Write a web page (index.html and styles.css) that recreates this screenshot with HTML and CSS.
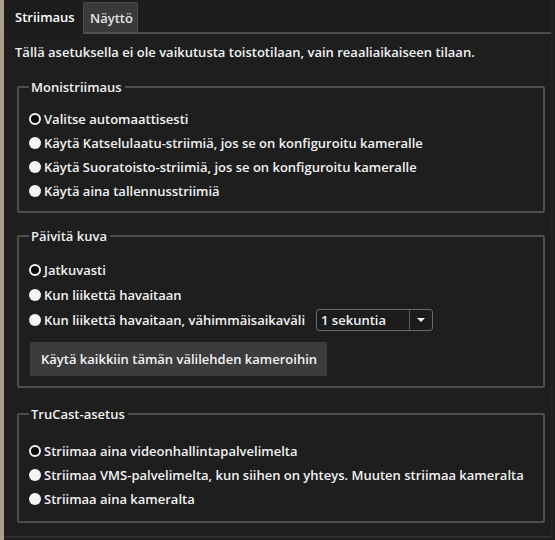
FILE: index.html
```html
<!DOCTYPE html>
<html lang="fi">
<head>
<meta charset="utf-8">
<link rel="stylesheet" href="styles.css">
</head>
<body>
<div class="app">
  <div class="tabbar">
    <div class="tab active">Striimaus</div>
    <div class="tab">Näyttö</div>
    <div class="tabfill"></div>
  </div>
  <div class="panel">
    <div class="info">Tällä asetuksella ei ole vaikutusta toistotilaan, vain reaaliaikaiseen tilaan.</div>

    <fieldset class="group g1">
      <legend>Monistriimaus</legend>
      <div class="row"><span class="radio on"></span>Valitse automaattisesti</div>
      <div class="row"><span class="radio"></span>Käytä Katselulaatu-striimiä, jos se on konfiguroitu kameralle</div>
      <div class="row"><span class="radio"></span>Käytä Suoratoisto-striimiä, jos se on konfiguroitu kameralle</div>
      <div class="row"><span class="radio"></span>Käytä aina tallennusstriimiä</div>
    </fieldset>

    <fieldset class="group g2">
      <legend>Päivitä kuva</legend>
      <div class="row"><span class="radio on"></span>Jatkuvasti</div>
      <div class="row"><span class="radio"></span>Kun liikettä havaitaan</div>
      <div class="row"><span class="radio"></span>Kun liikettä havaitaan, vähimmäisaikaväli
        <div class="select"><span class="sel-text">1 sekuntia</span><span class="sel-btn"><span class="tri"></span></span></div>
      </div>
      <div class="button">Käytä kaikkiin tämän välilehden kameroihin</div>
    </fieldset>

    <fieldset class="group g3">
      <legend>TruCast-asetus</legend>
      <div class="row"><span class="radio on"></span>Striimaa aina videonhallintapalvelimelta</div>
      <div class="row"><span class="radio"></span>Striimaa VMS-palvelimelta, kun siihen on yhteys. Muuten striimaa kameralta</div>
      <div class="row"><span class="radio"></span>Striimaa aina kameralta</div>
    </fieldset>
  </div>
</div>
</body>
</html>
```

FILE: styles.css
```css
html, body {
  margin: 0;
  padding: 0;
  background: #1c1c1d;
}
body {
  font-family: "Open Sans", "Liberation Sans", sans-serif;
  font-weight: 600;
  font-size: 13px;
  color: #f2f2f2;
  width: 555px;
  height: 540px;
  overflow: hidden;
}
.app {
  border-left: 4px solid #a99f8b;
  height: 540px;
  box-sizing: border-box;
  width: 553px;
  background: #1c1c1d;
  border-right: 2px solid #232323;
}
.tabbar {
  display: flex;
  height: 34px;
  align-items: flex-end;
}
.tab {
  height: 32px;
  box-sizing: border-box;
  line-height: 30px;
  color: #e8e8e8;
}
.tab.active {
  padding: 0 7px 0 11px;
  width: 79px;
  color: #ffffff;
  height: 34px;
  line-height: 34px;
}
.tab:not(.active) {
  background: #3a3a3b;
  border: 1px solid #4a4a4a;
  border-bottom: 2px solid #505050;
  border-radius: 2px 2px 0 0;
  width: 55px;
  padding-left: 6px;
  color: #e4e4e4;
}
.tabfill {
  flex: 1;
  height: 34px;
  box-sizing: border-box;
  border-bottom: 2px solid #4c4c4c;
}
.panel {
  background: #1e1e1f;
  padding: 9px 0 13px;
  border-bottom: 2px solid #2e2e2e;
}
.info {
  margin-left: 11px;
  line-height: 18px;
  height: 18px;
}
.group {
  margin: 17px 6px 0 13px;
  padding: 11px 10px 8px 10px;
  border: 2px solid #4e4e4e;
  border-radius: 2px;
  min-width: 0;
}
.group legend {
  padding: 0 3px 0 2px;
  line-height: 18px;
  color: #f0f0f0;
}
.g2 {
  margin-top: 14px;
  padding-top: 12px;
  padding-bottom: 10px;
}
.g3 {
  margin-top: 17px;
  padding-top: 16px;
  padding-bottom: 10px;
}
.row {
  display: flex;
  align-items: center;
  height: 24px;
  white-space: nowrap;
}
.g2 .row {
  height: 25px;
}
.radio {
  width: 12px;
  height: 12px;
  border-radius: 50%;
  background: #f4f4f4;
  margin-right: 3px;
  flex: none;
  box-sizing: border-box;
}
.radio.on {
  background: #050505;
  border: 2px solid #f4f4f4;
}
.select {
  display: flex;
  margin-left: 11px;
  width: 117px;
  height: 22px;
  box-sizing: border-box;
  border: 1px solid #6a6a6a;
  border-radius: 3px;
  background: #1c1c1d;
}
.sel-text {
  flex: 1;
  padding-left: 4px;
  line-height: 20px;
}
.sel-btn {
  width: 22px;
  border-left: 1px solid #5a5a5a;
  display: flex;
  align-items: center;
  justify-content: center;
}
.tri {
  width: 0;
  height: 0;
  border-left: 4px solid transparent;
  border-right: 4px solid transparent;
  border-top: 4px solid #f0f0f0;
}
.button {
  margin-top: 10px;
  width: 297px;
  height: 34px;
  box-sizing: border-box;
  background: #3c3c3d;
  line-height: 34px;
  padding-left: 11px;
  margin-left: 1px;
}
```
